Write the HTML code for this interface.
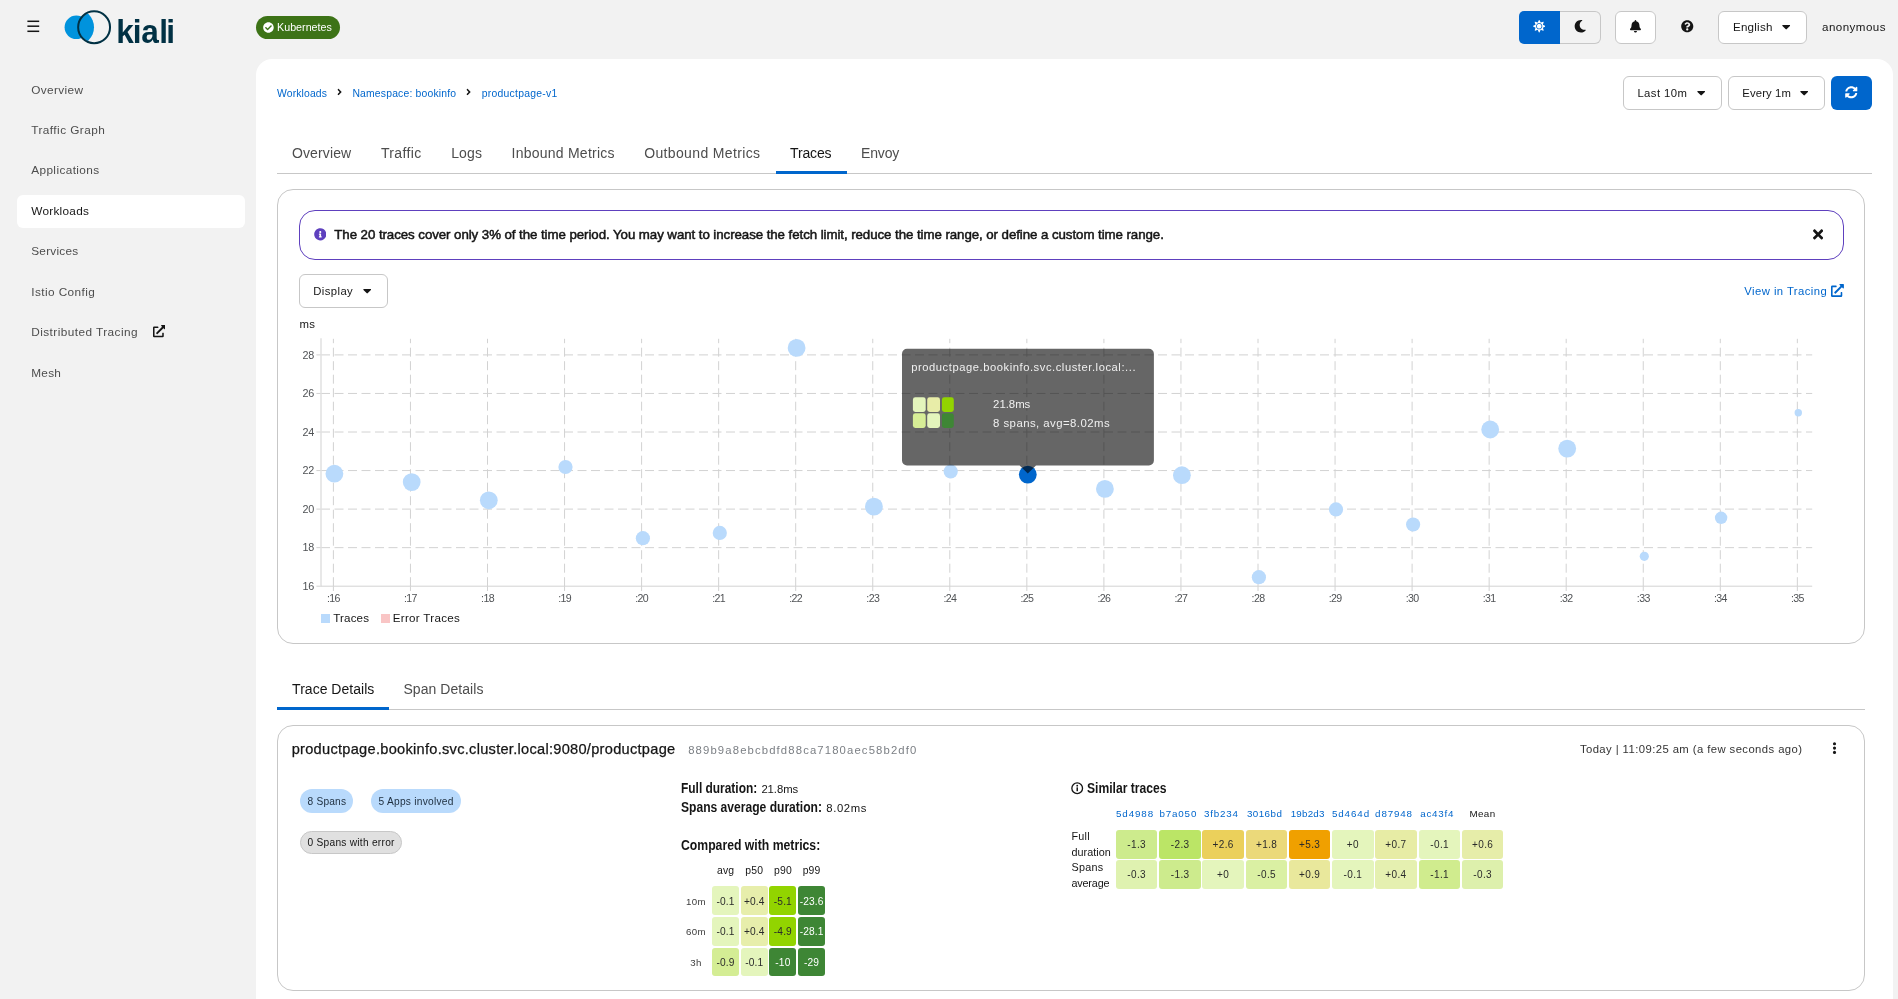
<!DOCTYPE html>
<html lang="en"><head><meta charset="utf-8"><title>Kiali</title>
<style>
html,body{margin:0;padding:0;}
body{width:1898px;height:999px;position:relative;overflow:hidden;background:#f2f2f2;font-family:"Liberation Sans",sans-serif;color:#151515;}
.b{position:absolute;box-sizing:border-box;}
.t{position:absolute;white-space:nowrap;}
.m{-webkit-text-stroke:0.5px currentColor;}
.m2{-webkit-text-stroke:0.25px currentColor;}
a{color:inherit;text-decoration:none;}
#root{position:absolute;left:0;top:0;width:1898px;height:999px;will-change:transform;}
</style></head><body><div id="root">
<svg class="b" style="left:27px;top:19px;" width="13" height="15" viewBox="0 0 13 15"><rect x="0.4" y="1.55" width="11.8" height="1.5" fill="#151515"/><rect x="0.4" y="6.45" width="11.8" height="1.5" fill="#151515"/><rect x="0.4" y="11.55" width="11.8" height="1.5" fill="#151515"/></svg>
<svg class="b" style="left:60px;top:6px;" width="120" height="44" viewBox="60 6 120 44"><defs><clipPath id="rc"><circle cx="94.1" cy="27.3" r="15.2"/></clipPath></defs><circle cx="76.35" cy="27.35" r="11.75" fill="#0093dd"/><circle cx="75.65" cy="27.3" r="18.35" fill="#0093dd" clip-path="url(#rc)"/><circle cx="94.1" cy="27.3" r="15.95" fill="none" stroke="#013144" stroke-width="2"/><text transform="translate(116.17,42.5) scale(0.93,1)" x="0 17.96 27.1 46.34 53.76" y="0" font-family="Liberation Sans, sans-serif" font-weight="700" font-size="34" fill="#013144">kiali</text></svg>
<div class="b" style="left:255.5px;top:16px;width:84px;height:23px;background:#3d7317;border-radius:12px;"></div>
<svg class="b" style="left:262.95px;top:21.95px;" width="10.9" height="10.9" viewBox="0 0 512 512"><path fill="#ffffff" d="M504 256c0 136.967-111.033 248-248 248S8 392.967 8 256 119.033 8 256 8s248 111.033 248 248zM227.314 387.314l184-184c6.248-6.248 6.248-16.379 0-22.627l-22.627-22.627c-6.248-6.249-16.379-6.249-22.628 0L216 308.118l-69.373-69.373c-6.248-6.249-16.379-6.249-22.628 0l-22.627 22.627c-6.248 6.248-6.248 16.379 0 22.627l104 104c6.249 6.249 16.379 6.249 22.628.001z"/></svg>
<div class="t " style="left:277.00px;top:19px;font-size:10.7px;line-height:16px;color:#ffffff;letter-spacing:0.027px;">Kubernetes</div>
<div class="b" style="left:1519px;top:11px;width:41px;height:33px;background:#0066cc;border-radius:5px 0 0 5px;"></div>
<div class="b" style="left:1560px;top:11px;width:41px;height:33px;background:#f2f2f2;border:1px solid #c7c7c7;border-left:none;border-radius:0 6px 6px 0;"></div>
<svg class="b" style="left:1533.0px;top:20.2px;" width="12.4" height="12.4" viewBox="0 0 512 512"><path fill="#ffffff" d="M256 160c-52.9 0-96 43.1-96 96s43.1 96 96 96 96-43.1 96-96-43.1-96-96-96zm246.4 80.5l-94.7-47.3 33.5-100.4c4.5-13.6-8.4-26.5-21.9-21.9l-100.4 33.5-47.4-94.8c-6.4-12.8-24.6-12.8-31 0l-47.3 94.7L92.7 70.8c-13.6-4.5-26.5 8.4-21.9 21.9l33.5 100.4-94.7 47.4c-12.8 6.4-12.8 24.6 0 31l94.7 47.3-33.5 100.5c-4.5 13.6 8.4 26.5 21.9 21.9l100.4-33.5 47.3 94.7c6.4 12.8 24.6 12.8 31 0l47.3-94.7 100.4 33.5c13.6 4.5 26.5-8.4 21.9-21.9l-33.5-100.4 94.7-47.3c13-6.5 13-24.7.2-31.1zm-155.9 106c-49.9 49.9-131.1 49.9-181 0-49.9-49.9-49.9-131.1 0-181 49.9-49.9 131.1-49.9 181 0 49.9 49.9 49.9 131.1 0 181z"/></svg>
<svg class="b" style="left:1573.9px;top:20.1px;" width="12.5" height="12.5" viewBox="0 0 512 512"><path fill="#151515" d="M283.211 512c78.962 0 151.079-35.925 198.857-94.792 7.068-8.708-.639-21.43-11.562-19.35-124.203 23.654-238.262-71.576-238.262-196.954 0-72.222 38.662-138.635 101.498-174.394 9.686-5.512 7.25-20.197-3.756-22.23A258.156 258.156 0 0 0 283.211 0c-141.309 0-256 114.511-256 256 0 141.309 114.511 256 256 256z"/></svg>
<div class="b" style="left:1615px;top:11px;width:41px;height:33px;background:#fff;border:1px solid #c7c7c7;border-radius:6px;"></div>
<svg class="b" style="left:1629.6px;top:20.1px;" width="10.95" height="12.5" viewBox="0 0 448 512"><path fill="#151515" d="M224 512c35.32 0 63.97-28.65 63.97-64H160.03c0 35.35 28.65 64 63.97 64zm215.39-149.71c-19.32-20.76-55.47-51.99-55.47-154.29 0-77.7-54.48-139.9-127.94-155.16V32c0-17.67-14.32-32-31.98-32s-31.98 14.33-31.98 32v20.84C118.56 68.1 64.08 130.3 64.08 208c0 102.3-36.15 133.53-55.47 154.29-6 6.45-8.66 14.16-8.61 21.71.11 16.4 12.98 32 32.1 32h383.8c19.12 0 32-15.6 32.1-32 .05-7.55-2.61-15.27-8.61-21.71z"/></svg>
<svg class="b" style="left:1681.0px;top:20.2px;" width="12.5" height="12.5" viewBox="0 0 512 512"><path fill="#151515" d="M504 256c0 136.997-111.043 248-248 248S8 392.997 8 256C8 119.083 119.043 8 256 8s248 111.083 248 248zM262.655 90c-54.497 0-89.255 22.957-116.549 63.758-3.536 5.286-2.353 12.415 2.715 16.258l34.699 26.31c5.205 3.947 12.621 3.008 16.665-2.122 17.864-22.658 30.113-35.797 57.303-35.797 20.429 0 45.698 13.148 45.698 32.958 0 14.976-12.363 22.667-32.534 33.976C247.128 238.528 216 254.941 216 296v4c0 6.627 5.373 12 12 12h56c6.627 0 12-5.373 12-12v-1.333c0-28.462 83.186-29.647 83.186-106.667 0-58.002-60.165-102-116.531-102zM256 338c-25.365 0-46 20.635-46 46 0 25.364 20.635 46 46 46s46-20.636 46-46c0-25.365-20.635-46-46-46z"/></svg>
<div class="b" style="left:1718px;top:11px;width:89px;height:33px;background:#fff;border:1px solid #c7c7c7;border-radius:6px;"></div>
<div class="t " style="left:1733.00px;top:18px;font-size:11.6px;line-height:17px;color:#151515;letter-spacing:0.222px;">English</div>
<svg class="b" style="left:1782.3px;top:20.3px;" width="8.4" height="13.4" viewBox="0 0 320 512"><path fill="#151515" d="M31.3 192h257.3c17.8 0 26.7 21.5 14.1 34.1L174.1 354.8c-7.8 7.8-20.5 7.8-28.3 0L17.2 226.1C4.6 213.5 13.5 192 31.3 192z"/></svg>
<div class="t " style="left:1822.00px;top:18px;font-size:11.6px;line-height:17px;color:#151515;letter-spacing:0.447px;">anonymous</div>
<div class="b" style="left:17px;top:195px;width:228px;height:33px;background:#fff;border-radius:6px;"></div>
<div class="t " style="left:31.20px;top:81px;font-size:11.8px;line-height:18px;color:#4d4d4d;letter-spacing:0.365px;">Overview</div>
<div class="t " style="left:31.20px;top:121px;font-size:11.8px;line-height:18px;color:#4d4d4d;letter-spacing:0.454px;">Traffic Graph</div>
<div class="t " style="left:31.20px;top:161px;font-size:11.8px;line-height:18px;color:#4d4d4d;letter-spacing:0.398px;">Applications</div>
<div class="t " style="left:31.20px;top:202px;font-size:11.8px;line-height:18px;color:#151515;letter-spacing:0.275px;">Workloads</div>
<div class="t " style="left:31.20px;top:242px;font-size:11.8px;line-height:18px;color:#4d4d4d;letter-spacing:0.256px;">Services</div>
<div class="t " style="left:31.20px;top:283px;font-size:11.8px;line-height:18px;color:#4d4d4d;letter-spacing:0.423px;">Istio Config</div>
<div class="t " style="left:31.20px;top:323px;font-size:11.8px;line-height:18px;color:#4d4d4d;letter-spacing:0.448px;">Distributed Tracing</div>
<div class="t " style="left:31.20px;top:364px;font-size:11.8px;line-height:18px;color:#4d4d4d;letter-spacing:0.286px;">Mesh</div>
<svg class="b" style="left:152.7px;top:325.4px;" width="12.3" height="12.3" viewBox="0 0 512 512"><path fill="#151515" d="M432,320H400a16,16,0,0,0-16,16V448H64V128H208a16,16,0,0,0,16-16V80a16,16,0,0,0-16-16H48A48,48,0,0,0,0,112V464a48,48,0,0,0,48,48H400a48,48,0,0,0,48-48V336A16,16,0,0,0,432,320ZM488,0h-128c-21.37,0-32.05,25.91-17,41l35.73,35.73L135,320.37a24,24,0,0,0,0,34L157.67,377a24,24,0,0,0,34,0L435.28,133.32,471,169c15,15,41,4.5,41-17V24A24,24,0,0,0,488,0Z"/></svg>
<div class="b" style="left:256px;top:59px;width:1637px;height:960px;background:#fff;border-radius:16px 16px 0 0;"></div>
<div class="t " style="left:277.10px;top:86px;font-size:10.4px;line-height:15px;color:#0066cc;letter-spacing:0.107px;">Workloads</div>
<svg class="b" style="left:335.6px;top:87.4px;" width="7.2" height="10" viewBox="0 0 256 512"><path fill="#151515" d="M224.3 273l-136 136c-9.4 9.4-24.6 9.4-33.9 0l-22.6-22.6c-9.4-9.4-9.4-24.6 0-33.9l96.4-96.4-96.4-96.4c-9.4-9.4-9.4-24.6 0-33.9L54.3 103c9.4-9.4 24.6-9.4 33.9 0l136 136c9.5 9.4 9.5 24.6.1 34z"/></svg>
<div class="t " style="left:352.40px;top:86px;font-size:10.4px;line-height:15px;color:#0066cc;letter-spacing:0.174px;">Namespace: bookinfo</div>
<svg class="b" style="left:465.4px;top:87.4px;" width="7.2" height="10" viewBox="0 0 256 512"><path fill="#151515" d="M224.3 273l-136 136c-9.4 9.4-24.6 9.4-33.9 0l-22.6-22.6c-9.4-9.4-9.4-24.6 0-33.9l96.4-96.4-96.4-96.4c-9.4-9.4-9.4-24.6 0-33.9L54.3 103c9.4-9.4 24.6-9.4 33.9 0l136 136c9.5 9.4 9.5 24.6.1 34z"/></svg>
<div class="t " style="left:481.80px;top:86px;font-size:10.4px;line-height:15px;color:#0066cc;letter-spacing:0.245px;">productpage-v1</div>
<div class="b" style="left:1623px;top:76px;width:99px;height:34px;background:#fff;border:1px solid #c7c7c7;border-radius:6px;"></div>
<div class="t " style="left:1637.40px;top:85px;font-size:11.3px;line-height:16px;color:#151515;letter-spacing:0.427px;">Last 10m</div>
<svg class="b" style="left:1697px;top:86px;" width="8.4" height="13.4" viewBox="0 0 320 512"><path fill="#151515" d="M31.3 192h257.3c17.8 0 26.7 21.5 14.1 34.1L174.1 354.8c-7.8 7.8-20.5 7.8-28.3 0L17.2 226.1C4.6 213.5 13.5 192 31.3 192z"/></svg>
<div class="b" style="left:1728px;top:76px;width:97px;height:34px;background:#fff;border:1px solid #c7c7c7;border-radius:6px;"></div>
<div class="t " style="left:1742.30px;top:85px;font-size:11.3px;line-height:16px;color:#151515;letter-spacing:0.122px;">Every 1m</div>
<svg class="b" style="left:1800px;top:86px;" width="8.4" height="13.4" viewBox="0 0 320 512"><path fill="#151515" d="M31.3 192h257.3c17.8 0 26.7 21.5 14.1 34.1L174.1 354.8c-7.8 7.8-20.5 7.8-28.3 0L17.2 226.1C4.6 213.5 13.5 192 31.3 192z"/></svg>
<div class="b" style="left:1831px;top:76px;width:41px;height:34px;background:#0066cc;border-radius:6px;"></div>
<svg class="b" style="left:1845.2px;top:86.4px;" width="12.5" height="12.5" viewBox="0 0 512 512"><path fill="#ffffff" d="M370.72 133.28C339.458 104.008 298.888 87.962 255.848 88c-77.458.068-144.328 53.178-162.791 126.85-1.344 5.363-6.122 9.15-11.651 9.15H24.103c-7.498 0-13.194-6.807-11.807-14.176C33.933 94.924 134.813 8 256 8c66.448 0 126.791 26.136 171.315 68.685L463.03 40.97C478.149 25.851 504 36.559 504 57.941V192c0 13.255-10.745 24-24 24H345.941c-21.382 0-32.09-25.851-16.971-40.971l41.75-41.749zM32 296h134.059c21.382 0 32.09 25.851 16.971 40.971l-41.75 41.75c31.262 29.273 71.835 45.319 114.876 45.28 77.418-.07 144.315-53.144 162.787-126.849 1.344-5.363 6.122-9.15 11.651-9.15h57.304c7.498 0 13.194 6.807 11.807 14.176C478.067 417.076 377.187 504 256 504c-66.448 0-126.791-26.136-171.315-68.685L48.97 471.03C33.851 486.149 8 475.441 8 454.059V320c0-13.255 10.745-24 24-24z"/></svg>
<div class="b" style="left:277px;top:173px;width:1595px;height:1px;background:#c7c7c7;"></div>
<div class="t " style="left:291.90px;top:143px;font-size:14.0px;line-height:20px;color:#4d4d4d;letter-spacing:0.132px;">Overview</div>
<div class="t " style="left:380.90px;top:143px;font-size:14.0px;line-height:20px;color:#4d4d4d;letter-spacing:0.383px;">Traffic</div>
<div class="t " style="left:451.20px;top:143px;font-size:14.0px;line-height:20px;color:#4d4d4d;letter-spacing:0.135px;">Logs</div>
<div class="t " style="left:511.50px;top:143px;font-size:14.0px;line-height:20px;color:#4d4d4d;letter-spacing:0.246px;">Inbound Metrics</div>
<div class="t " style="left:644.20px;top:143px;font-size:14.0px;line-height:20px;color:#4d4d4d;letter-spacing:0.356px;">Outbound Metrics</div>
<div class="t " style="left:790.10px;top:143px;font-size:14.0px;line-height:20px;color:#151515;letter-spacing:-0.161px;">Traces</div>
<div class="t " style="left:861.10px;top:143px;font-size:14.0px;line-height:20px;color:#4d4d4d;letter-spacing:-0.182px;">Envoy</div>
<div class="b" style="left:775.6px;top:171.4px;width:71.2px;height:2.8px;background:#0066cc;"></div>
<div class="b" style="left:277px;top:189px;width:1588px;height:455px;background:#fff;border:1px solid #c7c7c7;border-radius:16px;"></div>
<div class="b" style="left:299px;top:210px;width:1545px;height:50px;background:#fff;border:1px solid #5e40be;border-radius:16px;"></div>
<svg class="b" style="left:313.9px;top:228.2px;" width="12.6" height="12.6" viewBox="0 0 512 512"><path fill="#5e40be" d="M256 8C119.043 8 8 119.083 8 256c0 136.997 111.043 248 248 248s248-111.003 248-248C504 119.083 392.957 8 256 8zm0 110c23.196 0 42 18.804 42 42s-18.804 42-42 42-42-18.804-42-42 18.804-42 42-42zm56 254c0 6.627-5.373 12-12 12h-88c-6.627 0-12-5.373-12-12v-24c0-6.627 5.373-12 12-12h12v-64h-12c-6.627 0-12-5.373-12-12v-24c0-6.627 5.373-12 12-12h64c6.627 0 12 5.373 12 12v100h12c6.627 0 12 5.373 12 12v24z"/></svg>
<div class="t m" style="left:334.30px;top:225px;font-size:13.3px;line-height:19px;color:#151515;letter-spacing:-0.071px;">The 20 traces cover only 3% of the time period. You may want to increase the fetch limit, reduce the time range, or define a custom time range.</div>
<svg class="b" style="left:1813.2px;top:226.6px;" width="10.2" height="14.8" viewBox="0 0 352 512"><path fill="#151515" d="M242.72 256l100.07-100.07c12.28-12.28 12.28-32.19 0-44.48l-22.24-22.24c-12.28-12.28-32.19-12.28-44.48 0L176 189.28 75.93 89.21c-12.28-12.28-32.19-12.28-44.48 0L9.21 111.45c-12.28 12.28-12.28 32.19 0 44.48L109.28 256 9.21 356.07c-12.28 12.28-12.28 32.19 0 44.48l22.24 22.24c12.28 12.28 32.2 12.28 44.48 0L176 322.72l100.07 100.07c12.28 12.28 32.2 12.28 44.48 0l22.24-22.24c12.28-12.28 12.28-32.19 0-44.48L242.72 256z"/></svg>
<div class="b" style="left:299px;top:274px;width:89px;height:34px;background:#fff;border:1px solid #c7c7c7;border-radius:6px;"></div>
<div class="t " style="left:313.20px;top:283px;font-size:11.3px;line-height:16px;color:#151515;letter-spacing:0.421px;">Display</div>
<svg class="b" style="left:363.1px;top:284.2px;" width="8.4" height="13.4" viewBox="0 0 320 512"><path fill="#151515" d="M31.3 192h257.3c17.8 0 26.7 21.5 14.1 34.1L174.1 354.8c-7.8 7.8-20.5 7.8-28.3 0L17.2 226.1C4.6 213.5 13.5 192 31.3 192z"/></svg>
<div class="t " style="left:1744.30px;top:283px;font-size:11.3px;line-height:16px;color:#0066cc;letter-spacing:0.432px;">View in Tracing</div>
<svg class="b" style="left:1830.7px;top:283.8px;" width="12.9" height="12.9" viewBox="0 0 512 512"><path fill="#0066cc" d="M432,320H400a16,16,0,0,0-16,16V448H64V128H208a16,16,0,0,0,16-16V80a16,16,0,0,0-16-16H48A48,48,0,0,0,0,112V464a48,48,0,0,0,48,48H400a48,48,0,0,0,48-48V336A16,16,0,0,0,432,320ZM488,0h-128c-21.37,0-32.05,25.91-17,41l35.73,35.73L135,320.37a24,24,0,0,0,0,34L157.67,377a24,24,0,0,0,34,0L435.28,133.32,471,169c15,15,41,4.5,41-17V24A24,24,0,0,0,488,0Z"/></svg>
<div class="t " style="left:299.50px;top:316px;font-size:11.4px;line-height:16px;color:#151515;letter-spacing:0.302px;">ms</div>
<svg class="b" style="left:290px;top:330px;" width="1580" height="312" viewBox="290 330 1580 312"><line x1="321.0" y1="354.90" x2="1812.2" y2="354.90" stroke="#d2d2d2" stroke-width="1" stroke-dasharray="9 4.5"/><line x1="321.0" y1="393.45" x2="1812.2" y2="393.45" stroke="#d2d2d2" stroke-width="1" stroke-dasharray="9 4.5"/><line x1="321.0" y1="432.00" x2="1812.2" y2="432.00" stroke="#d2d2d2" stroke-width="1" stroke-dasharray="9 4.5"/><line x1="321.0" y1="470.55" x2="1812.2" y2="470.55" stroke="#d2d2d2" stroke-width="1" stroke-dasharray="9 4.5"/><line x1="321.0" y1="509.10" x2="1812.2" y2="509.10" stroke="#d2d2d2" stroke-width="1" stroke-dasharray="9 4.5"/><line x1="321.0" y1="547.65" x2="1812.2" y2="547.65" stroke="#d2d2d2" stroke-width="1" stroke-dasharray="9 4.5"/><line x1="316.4" y1="354.90" x2="321.0" y2="354.90" stroke="#d2d2d2" stroke-width="1"/><line x1="316.4" y1="393.45" x2="321.0" y2="393.45" stroke="#d2d2d2" stroke-width="1"/><line x1="316.4" y1="432.00" x2="321.0" y2="432.00" stroke="#d2d2d2" stroke-width="1"/><line x1="316.4" y1="470.55" x2="321.0" y2="470.55" stroke="#d2d2d2" stroke-width="1"/><line x1="316.4" y1="509.10" x2="321.0" y2="509.10" stroke="#d2d2d2" stroke-width="1"/><line x1="316.4" y1="547.65" x2="321.0" y2="547.65" stroke="#d2d2d2" stroke-width="1"/><line x1="316.4" y1="586.20" x2="321.0" y2="586.20" stroke="#d2d2d2" stroke-width="1"/><line x1="333.40" y1="586.2" x2="333.40" y2="338.8" stroke="#d2d2d2" stroke-width="1" stroke-dasharray="9 4.5"/><line x1="333.40" y1="586.2" x2="333.40" y2="591.0" stroke="#d2d2d2" stroke-width="1"/><line x1="410.45" y1="586.2" x2="410.45" y2="338.8" stroke="#d2d2d2" stroke-width="1" stroke-dasharray="9 4.5"/><line x1="410.45" y1="586.2" x2="410.45" y2="591.0" stroke="#d2d2d2" stroke-width="1"/><line x1="487.50" y1="586.2" x2="487.50" y2="338.8" stroke="#d2d2d2" stroke-width="1" stroke-dasharray="9 4.5"/><line x1="487.50" y1="586.2" x2="487.50" y2="591.0" stroke="#d2d2d2" stroke-width="1"/><line x1="564.55" y1="586.2" x2="564.55" y2="338.8" stroke="#d2d2d2" stroke-width="1" stroke-dasharray="9 4.5"/><line x1="564.55" y1="586.2" x2="564.55" y2="591.0" stroke="#d2d2d2" stroke-width="1"/><line x1="641.60" y1="586.2" x2="641.60" y2="338.8" stroke="#d2d2d2" stroke-width="1" stroke-dasharray="9 4.5"/><line x1="641.60" y1="586.2" x2="641.60" y2="591.0" stroke="#d2d2d2" stroke-width="1"/><line x1="718.65" y1="586.2" x2="718.65" y2="338.8" stroke="#d2d2d2" stroke-width="1" stroke-dasharray="9 4.5"/><line x1="718.65" y1="586.2" x2="718.65" y2="591.0" stroke="#d2d2d2" stroke-width="1"/><line x1="795.70" y1="586.2" x2="795.70" y2="338.8" stroke="#d2d2d2" stroke-width="1" stroke-dasharray="9 4.5"/><line x1="795.70" y1="586.2" x2="795.70" y2="591.0" stroke="#d2d2d2" stroke-width="1"/><line x1="872.75" y1="586.2" x2="872.75" y2="338.8" stroke="#d2d2d2" stroke-width="1" stroke-dasharray="9 4.5"/><line x1="872.75" y1="586.2" x2="872.75" y2="591.0" stroke="#d2d2d2" stroke-width="1"/><line x1="949.80" y1="586.2" x2="949.80" y2="338.8" stroke="#d2d2d2" stroke-width="1" stroke-dasharray="9 4.5"/><line x1="949.80" y1="586.2" x2="949.80" y2="591.0" stroke="#d2d2d2" stroke-width="1"/><line x1="1026.85" y1="586.2" x2="1026.85" y2="338.8" stroke="#d2d2d2" stroke-width="1" stroke-dasharray="9 4.5"/><line x1="1026.85" y1="586.2" x2="1026.85" y2="591.0" stroke="#d2d2d2" stroke-width="1"/><line x1="1103.90" y1="586.2" x2="1103.90" y2="338.8" stroke="#d2d2d2" stroke-width="1" stroke-dasharray="9 4.5"/><line x1="1103.90" y1="586.2" x2="1103.90" y2="591.0" stroke="#d2d2d2" stroke-width="1"/><line x1="1180.95" y1="586.2" x2="1180.95" y2="338.8" stroke="#d2d2d2" stroke-width="1" stroke-dasharray="9 4.5"/><line x1="1180.95" y1="586.2" x2="1180.95" y2="591.0" stroke="#d2d2d2" stroke-width="1"/><line x1="1258.00" y1="586.2" x2="1258.00" y2="338.8" stroke="#d2d2d2" stroke-width="1" stroke-dasharray="9 4.5"/><line x1="1258.00" y1="586.2" x2="1258.00" y2="591.0" stroke="#d2d2d2" stroke-width="1"/><line x1="1335.05" y1="586.2" x2="1335.05" y2="338.8" stroke="#d2d2d2" stroke-width="1" stroke-dasharray="9 4.5"/><line x1="1335.05" y1="586.2" x2="1335.05" y2="591.0" stroke="#d2d2d2" stroke-width="1"/><line x1="1412.10" y1="586.2" x2="1412.10" y2="338.8" stroke="#d2d2d2" stroke-width="1" stroke-dasharray="9 4.5"/><line x1="1412.10" y1="586.2" x2="1412.10" y2="591.0" stroke="#d2d2d2" stroke-width="1"/><line x1="1489.15" y1="586.2" x2="1489.15" y2="338.8" stroke="#d2d2d2" stroke-width="1" stroke-dasharray="9 4.5"/><line x1="1489.15" y1="586.2" x2="1489.15" y2="591.0" stroke="#d2d2d2" stroke-width="1"/><line x1="1566.20" y1="586.2" x2="1566.20" y2="338.8" stroke="#d2d2d2" stroke-width="1" stroke-dasharray="9 4.5"/><line x1="1566.20" y1="586.2" x2="1566.20" y2="591.0" stroke="#d2d2d2" stroke-width="1"/><line x1="1643.25" y1="586.2" x2="1643.25" y2="338.8" stroke="#d2d2d2" stroke-width="1" stroke-dasharray="9 4.5"/><line x1="1643.25" y1="586.2" x2="1643.25" y2="591.0" stroke="#d2d2d2" stroke-width="1"/><line x1="1720.30" y1="586.2" x2="1720.30" y2="338.8" stroke="#d2d2d2" stroke-width="1" stroke-dasharray="9 4.5"/><line x1="1720.30" y1="586.2" x2="1720.30" y2="591.0" stroke="#d2d2d2" stroke-width="1"/><line x1="1797.35" y1="586.2" x2="1797.35" y2="338.8" stroke="#d2d2d2" stroke-width="1" stroke-dasharray="9 4.5"/><line x1="1797.35" y1="586.2" x2="1797.35" y2="591.0" stroke="#d2d2d2" stroke-width="1"/><line x1="321.0" y1="338.3" x2="321.0" y2="586.2" stroke="#e0e0e0" stroke-width="1.5"/><line x1="321.0" y1="586.2" x2="1812.2" y2="586.2" stroke="#d2d2d2" stroke-width="1"/><circle cx="334.4" cy="473.7" r="8.9" fill="#b9dafc"/><circle cx="411.7" cy="482.1" r="8.9" fill="#b9dafc"/><circle cx="488.8" cy="500.3" r="8.9" fill="#b9dafc"/><circle cx="565.5" cy="467.0" r="7.1" fill="#b9dafc"/><circle cx="642.9" cy="538.2" r="7.1" fill="#b9dafc"/><circle cx="719.8" cy="532.9" r="7.1" fill="#b9dafc"/><circle cx="796.6" cy="347.9" r="8.9" fill="#b9dafc"/><circle cx="873.9" cy="506.6" r="8.9" fill="#b9dafc"/><circle cx="950.7" cy="471.5" r="7.1" fill="#b9dafc"/><circle cx="1027.8" cy="474.6" r="8.9" fill="#0066cc"/><circle cx="1104.9" cy="488.9" r="8.9" fill="#b9dafc"/><circle cx="1181.9" cy="475.2" r="8.9" fill="#b9dafc"/><circle cx="1258.9" cy="577.2" r="7.1" fill="#b9dafc"/><circle cx="1336.0" cy="509.4" r="7.1" fill="#b9dafc"/><circle cx="1413.1" cy="524.5" r="7.1" fill="#b9dafc"/><circle cx="1490.2" cy="429.5" r="8.9" fill="#b9dafc"/><circle cx="1567.2" cy="448.6" r="8.9" fill="#b9dafc"/><circle cx="1644.3" cy="556.3" r="4.6" fill="#b9dafc"/><circle cx="1721.1" cy="517.8" r="6.2" fill="#b9dafc"/><circle cx="1798.3" cy="412.7" r="3.7" fill="#b9dafc"/><path d="M907 348.8H1148.9a5 5 0 0 1 5 5V460.4a5 5 0 0 1-5 5H1036L1027.8 473.6 1019.6 465.4H907a5 5 0 0 1-5-5V353.8a5 5 0 0 1 5-5z" fill="#000" fill-opacity="0.6"/><rect x="912.9" y="397.3" width="12.8" height="14.6" rx="2.4" fill="#e4f5bc"/><rect x="927.2" y="397.3" width="12.8" height="14.6" rx="2.4" fill="#e8eda8"/><rect x="941.9" y="397.3" width="11.9" height="14.6" rx="2.4" fill="#92d400"/><rect x="912.9" y="413.3" width="12.8" height="14.6" rx="2.4" fill="#d7ee96"/><rect x="927.2" y="413.3" width="12.8" height="14.6" rx="2.4" fill="#e4f5bc"/><rect x="941.9" y="413.3" width="11.9" height="14.6" rx="2.4" fill="#3e8635"/></svg>
<div class="t " style="left:302.40px;top:347px;font-size:10.8px;line-height:16px;color:#4f5255;letter-spacing:-0.107px;">28</div>
<div class="t " style="left:302.40px;top:385px;font-size:10.8px;line-height:16px;color:#4f5255;letter-spacing:-0.107px;">26</div>
<div class="t " style="left:302.40px;top:424px;font-size:10.8px;line-height:16px;color:#4f5255;letter-spacing:-0.107px;">24</div>
<div class="t " style="left:302.40px;top:462px;font-size:10.8px;line-height:16px;color:#4f5255;letter-spacing:-0.107px;">22</div>
<div class="t " style="left:302.40px;top:501px;font-size:10.8px;line-height:16px;color:#4f5255;letter-spacing:-0.107px;">20</div>
<div class="t " style="left:302.40px;top:539px;font-size:10.8px;line-height:16px;color:#4f5255;letter-spacing:-0.107px;">18</div>
<div class="t " style="left:302.40px;top:578px;font-size:10.8px;line-height:16px;color:#4f5255;letter-spacing:-0.107px;">16</div>
<div class="t " style="left:327.00px;top:590px;font-size:10.6px;line-height:16px;color:#4f5255;letter-spacing:-0.645px;">:16</div>
<div class="t " style="left:404.05px;top:590px;font-size:10.6px;line-height:16px;color:#4f5255;letter-spacing:-0.645px;">:17</div>
<div class="t " style="left:481.10px;top:590px;font-size:10.6px;line-height:16px;color:#4f5255;letter-spacing:-0.645px;">:18</div>
<div class="t " style="left:558.15px;top:590px;font-size:10.6px;line-height:16px;color:#4f5255;letter-spacing:-0.645px;">:19</div>
<div class="t " style="left:635.20px;top:590px;font-size:10.6px;line-height:16px;color:#4f5255;letter-spacing:-0.645px;">:20</div>
<div class="t " style="left:712.25px;top:590px;font-size:10.6px;line-height:16px;color:#4f5255;letter-spacing:-0.645px;">:21</div>
<div class="t " style="left:789.30px;top:590px;font-size:10.6px;line-height:16px;color:#4f5255;letter-spacing:-0.645px;">:22</div>
<div class="t " style="left:866.35px;top:590px;font-size:10.6px;line-height:16px;color:#4f5255;letter-spacing:-0.645px;">:23</div>
<div class="t " style="left:943.40px;top:590px;font-size:10.6px;line-height:16px;color:#4f5255;letter-spacing:-0.645px;">:24</div>
<div class="t " style="left:1020.45px;top:590px;font-size:10.6px;line-height:16px;color:#4f5255;letter-spacing:-0.645px;">:25</div>
<div class="t " style="left:1097.50px;top:590px;font-size:10.6px;line-height:16px;color:#4f5255;letter-spacing:-0.645px;">:26</div>
<div class="t " style="left:1174.55px;top:590px;font-size:10.6px;line-height:16px;color:#4f5255;letter-spacing:-0.645px;">:27</div>
<div class="t " style="left:1251.60px;top:590px;font-size:10.6px;line-height:16px;color:#4f5255;letter-spacing:-0.645px;">:28</div>
<div class="t " style="left:1328.65px;top:590px;font-size:10.6px;line-height:16px;color:#4f5255;letter-spacing:-0.645px;">:29</div>
<div class="t " style="left:1405.70px;top:590px;font-size:10.6px;line-height:16px;color:#4f5255;letter-spacing:-0.645px;">:30</div>
<div class="t " style="left:1482.75px;top:590px;font-size:10.6px;line-height:16px;color:#4f5255;letter-spacing:-0.645px;">:31</div>
<div class="t " style="left:1559.80px;top:590px;font-size:10.6px;line-height:16px;color:#4f5255;letter-spacing:-0.645px;">:32</div>
<div class="t " style="left:1636.85px;top:590px;font-size:10.6px;line-height:16px;color:#4f5255;letter-spacing:-0.645px;">:33</div>
<div class="t " style="left:1713.90px;top:590px;font-size:10.6px;line-height:16px;color:#4f5255;letter-spacing:-0.645px;">:34</div>
<div class="t " style="left:1790.95px;top:590px;font-size:10.6px;line-height:16px;color:#4f5255;letter-spacing:-0.645px;">:35</div>
<div class="b" style="left:321.1px;top:613.8px;width:8.8px;height:8.9px;background:#b9dafc;"></div>
<div class="t " style="left:333.30px;top:609px;font-size:11.6px;line-height:17px;color:#151515;letter-spacing:0.130px;">Traces</div>
<div class="b" style="left:381.1px;top:613.8px;width:8.8px;height:8.9px;background:#f9c5c5;"></div>
<div class="t " style="left:392.70px;top:609px;font-size:11.6px;line-height:17px;color:#151515;letter-spacing:0.307px;">Error Traces</div>
<div class="t " style="left:911.20px;top:359px;font-size:11.2px;line-height:16px;color:#f0f0f0;letter-spacing:0.557px;">productpage.bookinfo.svc.cluster.local:...</div>
<div class="t " style="left:993.10px;top:396px;font-size:11.4px;line-height:16px;color:#f0f0f0;letter-spacing:-0.031px;">21.8ms</div>
<div class="t " style="left:993.10px;top:415px;font-size:11.4px;line-height:16px;color:#f0f0f0;letter-spacing:0.443px;">8 spans, avg=8.02ms</div>
<div class="b" style="left:277px;top:709px;width:1588px;height:1px;background:#c7c7c7;"></div>
<div class="t " style="left:292.10px;top:679px;font-size:14.0px;line-height:20px;color:#151515;letter-spacing:0.019px;">Trace Details</div>
<div class="t " style="left:403.40px;top:679px;font-size:14.0px;line-height:20px;color:#4d4d4d;letter-spacing:0.060px;">Span Details</div>
<div class="b" style="left:277px;top:707.4px;width:112.1px;height:2.8px;background:#0066cc;"></div>
<div class="b" style="left:277px;top:725px;width:1588px;height:266px;background:#fff;border:1px solid #c7c7c7;border-radius:16px;"></div>
<div class="t m2" style="left:291.70px;top:739px;font-size:14.6px;line-height:20px;color:#151515;letter-spacing:0.280px;">productpage.bookinfo.svc.cluster.local:9080/productpage</div>
<div class="t " style="left:688.20px;top:742px;font-size:11.3px;line-height:16px;color:#7b7f84;letter-spacing:1.137px;">889b9a8ebcbdfd88ca7180aec58b2df0</div>
<div class="t " style="left:1579.90px;top:741px;font-size:11.3px;line-height:16px;color:#333;letter-spacing:0.419px;">Today | 11:09:25 am (a few seconds ago)</div>
<svg class="b" style="left:1832px;top:742px;" width="5" height="12" viewBox="0 0 5 12"><circle cx="2.5" cy="1.7" r="1.55" fill="#151515"/><circle cx="2.5" cy="6.1" r="1.55" fill="#151515"/><circle cx="2.5" cy="10.4" r="1.55" fill="#151515"/></svg>
<div class="b" style="left:300px;top:789.2px;width:52.8px;height:23.6px;background:#b9dafc;border-radius:12px;"></div>
<div class="t " style="left:307.50px;top:794px;font-size:10.2px;line-height:15px;color:#1d2d3d;letter-spacing:0.196px;">8 Spans</div>
<div class="b" style="left:371.2px;top:789.2px;width:89.7px;height:23.6px;background:#b9dafc;border-radius:12px;"></div>
<div class="t " style="left:378.50px;top:794px;font-size:10.2px;line-height:15px;color:#1d2d3d;letter-spacing:0.257px;">5 Apps involved</div>
<div class="b" style="left:300px;top:831px;width:102px;height:22.6px;background:#e0e0e0;border:1px solid #c7c7c7;border-radius:12px;"></div>
<div class="t " style="left:307.50px;top:835px;font-size:10.2px;line-height:15px;color:#151515;letter-spacing:0.252px;">0 Spans with error</div>
<div class="t " style="left:681.40px;top:778px;font-size:14.0px;line-height:20px;color:#151515;font-weight:700;transform:scaleX(0.8521);transform-origin:0 0;">Full duration:</div>
<div class="t " style="left:761.40px;top:781px;font-size:11.3px;line-height:16px;color:#151515;letter-spacing:-0.059px;">21.8ms</div>
<div class="t " style="left:681.40px;top:797px;font-size:14.0px;line-height:20px;color:#151515;font-weight:700;transform:scaleX(0.8630);transform-origin:0 0;">Spans average duration:</div>
<div class="t " style="left:826.30px;top:800px;font-size:11.3px;line-height:16px;color:#151515;letter-spacing:0.607px;">8.02ms</div>
<div class="t " style="left:681.40px;top:835px;font-size:14.0px;line-height:20px;color:#151515;font-weight:700;transform:scaleX(0.8729);transform-origin:0 0;">Compared with metrics:</div>
<div class="t " style="left:625.60px;width:200px;text-align:center;top:863px;font-size:10.4px;line-height:15px;color:#151515;letter-spacing:0.200px;">avg</div>
<div class="t " style="left:654.27px;width:200px;text-align:center;top:863px;font-size:10.4px;line-height:15px;color:#151515;letter-spacing:0.200px;">p50</div>
<div class="t " style="left:682.93px;width:200px;text-align:center;top:863px;font-size:10.4px;line-height:15px;color:#151515;letter-spacing:0.200px;">p90</div>
<div class="t " style="left:711.60px;width:200px;text-align:center;top:863px;font-size:10.4px;line-height:15px;color:#151515;letter-spacing:0.200px;">p99</div>
<div class="t " style="left:595.95px;width:200px;text-align:center;top:894px;font-size:9.7px;line-height:15px;color:#3c3c3c;letter-spacing:0.300px;">10m</div>
<div class="b" style="left:712px;top:886px;width:27px;height:28.6px;background:#e4f5bc;border-radius:3px;"></div>
<div class="t " style="left:625.56px;width:200px;text-align:center;top:894px;font-size:10.2px;line-height:15px;color:#2b2b2b;letter-spacing:0.120px;">-0.1</div>
<div class="b" style="left:740.67px;top:886px;width:27px;height:28.6px;background:#e7eeab;border-radius:3px;"></div>
<div class="t " style="left:654.23px;width:200px;text-align:center;top:894px;font-size:10.2px;line-height:15px;color:#2b2b2b;letter-spacing:0.120px;">+0.4</div>
<div class="b" style="left:769.33px;top:886px;width:27px;height:28.6px;background:#92d400;border-radius:3px;"></div>
<div class="t " style="left:682.89px;width:200px;text-align:center;top:894px;font-size:10.2px;line-height:15px;color:#2b2b2b;letter-spacing:0.120px;">-5.1</div>
<div class="b" style="left:798px;top:886px;width:27px;height:28.6px;background:#3e8635;border-radius:3px;"></div>
<div class="t " style="left:711.56px;width:200px;text-align:center;top:894px;font-size:10.2px;line-height:15px;color:#ffffff;letter-spacing:0.120px;">-23.6</div>
<div class="t " style="left:595.95px;width:200px;text-align:center;top:924px;font-size:9.7px;line-height:15px;color:#3c3c3c;letter-spacing:0.300px;">60m</div>
<div class="b" style="left:712px;top:917px;width:27px;height:28.6px;background:#e4f5bc;border-radius:3px;"></div>
<div class="t " style="left:625.56px;width:200px;text-align:center;top:924px;font-size:10.2px;line-height:15px;color:#2b2b2b;letter-spacing:0.120px;">-0.1</div>
<div class="b" style="left:740.67px;top:917px;width:27px;height:28.6px;background:#e7eeab;border-radius:3px;"></div>
<div class="t " style="left:654.23px;width:200px;text-align:center;top:924px;font-size:10.2px;line-height:15px;color:#2b2b2b;letter-spacing:0.120px;">+0.4</div>
<div class="b" style="left:769.33px;top:917px;width:27px;height:28.6px;background:#92d400;border-radius:3px;"></div>
<div class="t " style="left:682.89px;width:200px;text-align:center;top:924px;font-size:10.2px;line-height:15px;color:#2b2b2b;letter-spacing:0.120px;">-4.9</div>
<div class="b" style="left:798px;top:917px;width:27px;height:28.6px;background:#3e8635;border-radius:3px;"></div>
<div class="t " style="left:711.56px;width:200px;text-align:center;top:924px;font-size:10.2px;line-height:15px;color:#ffffff;letter-spacing:0.120px;">-28.1</div>
<div class="t " style="left:595.95px;width:200px;text-align:center;top:955px;font-size:9.7px;line-height:15px;color:#3c3c3c;letter-spacing:0.300px;">3h</div>
<div class="b" style="left:712px;top:948px;width:27px;height:28px;background:#d4ed94;border-radius:3px;"></div>
<div class="t " style="left:625.56px;width:200px;text-align:center;top:955px;font-size:10.2px;line-height:15px;color:#2b2b2b;letter-spacing:0.120px;">-0.9</div>
<div class="b" style="left:740.67px;top:948px;width:27px;height:28px;background:#e4f5bc;border-radius:3px;"></div>
<div class="t " style="left:654.23px;width:200px;text-align:center;top:955px;font-size:10.2px;line-height:15px;color:#2b2b2b;letter-spacing:0.120px;">-0.1</div>
<div class="b" style="left:769.33px;top:948px;width:27px;height:28px;background:#3e8635;border-radius:3px;"></div>
<div class="t " style="left:682.89px;width:200px;text-align:center;top:955px;font-size:10.2px;line-height:15px;color:#ffffff;letter-spacing:0.120px;">-10</div>
<div class="b" style="left:798px;top:948px;width:27px;height:28px;background:#3e8635;border-radius:3px;"></div>
<div class="t " style="left:711.56px;width:200px;text-align:center;top:955px;font-size:10.2px;line-height:15px;color:#ffffff;letter-spacing:0.120px;">-29</div>
<svg class="b" style="left:1071.2px;top:782.2px;" width="12.4" height="12.4" viewBox="0 0 16 16"><circle cx="8" cy="8" r="6.9" fill="none" stroke="#151515" stroke-width="1.7"/><rect x="7.1" y="6.9" width="1.9" height="5" fill="#151515"/><circle cx="8.05" cy="4.7" r="1.2" fill="#151515"/></svg>
<div class="t " style="left:1086.70px;top:778px;font-size:14.0px;line-height:20px;color:#151515;font-weight:700;transform:scaleX(0.8657);transform-origin:0 0;">Similar traces</div>
<div class="t " style="left:1116.00px;top:806px;font-size:9.8px;line-height:15px;color:#0066cc;letter-spacing:0.883px;">5d4988</div>
<div class="t " style="left:1159.40px;top:806px;font-size:9.8px;line-height:15px;color:#0066cc;letter-spacing:0.850px;">b7a050</div>
<div class="t " style="left:1204.00px;top:806px;font-size:9.8px;line-height:15px;color:#0066cc;letter-spacing:0.821px;">3fb234</div>
<div class="t " style="left:1246.90px;top:806px;font-size:9.8px;line-height:15px;color:#0066cc;letter-spacing:0.450px;">3016bd</div>
<div class="t " style="left:1290.70px;top:806px;font-size:9.8px;line-height:15px;color:#0066cc;letter-spacing:0.216px;">19b2d3</div>
<div class="t " style="left:1331.90px;top:806px;font-size:9.8px;line-height:15px;color:#0066cc;letter-spacing:0.900px;">5d464d</div>
<div class="t " style="left:1375.10px;top:806px;font-size:9.8px;line-height:15px;color:#0066cc;letter-spacing:0.850px;">d87948</div>
<div class="t " style="left:1420.20px;top:806px;font-size:9.8px;line-height:15px;color:#0066cc;letter-spacing:0.779px;">ac43f4</div>
<div class="t " style="left:1469.40px;top:806px;font-size:9.8px;line-height:15px;color:#151515;letter-spacing:0.396px;">Mean</div>
<div class="t " style="left:1071.40px;top:828px;font-size:10.8px;line-height:16px;color:#151515;letter-spacing:0.300px;">Full</div>
<div class="t " style="left:1071.40px;top:844px;font-size:10.8px;line-height:16px;color:#151515;letter-spacing:0.059px;">duration</div>
<div class="t " style="left:1071.40px;top:859px;font-size:10.8px;line-height:16px;color:#151515;letter-spacing:0.300px;">Spans</div>
<div class="t " style="left:1071.40px;top:875px;font-size:10.8px;line-height:16px;color:#151515;letter-spacing:-0.147px;">average</div>
<div class="b" style="left:1116px;top:830px;width:41px;height:29px;background:#cdeb8d;border-radius:3px;"></div>
<div class="t " style="left:1036.67px;width:200px;text-align:center;top:837px;font-size:10.0px;line-height:15px;color:#2b2b2b;letter-spacing:0.350px;">-1.3</div>
<div class="b" style="left:1159px;top:830px;width:42px;height:29px;background:#bbe566;border-radius:3px;"></div>
<div class="t " style="left:1080.17px;width:200px;text-align:center;top:837px;font-size:10.0px;line-height:15px;color:#2b2b2b;letter-spacing:0.350px;">-2.3</div>
<div class="b" style="left:1202px;top:830px;width:42px;height:29px;background:#ebd05b;border-radius:3px;"></div>
<div class="t " style="left:1123.17px;width:200px;text-align:center;top:837px;font-size:10.0px;line-height:15px;color:#2b2b2b;letter-spacing:0.350px;">+2.6</div>
<div class="b" style="left:1246px;top:830px;width:41px;height:29px;background:#ebd97a;border-radius:3px;"></div>
<div class="t " style="left:1166.67px;width:200px;text-align:center;top:837px;font-size:10.0px;line-height:15px;color:#2b2b2b;letter-spacing:0.350px;">+1.8</div>
<div class="b" style="left:1289px;top:830px;width:41px;height:29px;background:#f0a000;border-radius:3px;"></div>
<div class="t " style="left:1209.67px;width:200px;text-align:center;top:837px;font-size:10.0px;line-height:15px;color:#2b2b2b;letter-spacing:0.350px;">+5.3</div>
<div class="b" style="left:1332px;top:830px;width:41.5px;height:29px;background:#e4f5bc;border-radius:3px;"></div>
<div class="t " style="left:1252.92px;width:200px;text-align:center;top:837px;font-size:10.0px;line-height:15px;color:#2b2b2b;letter-spacing:0.350px;">+0</div>
<div class="b" style="left:1375px;top:830px;width:41.5px;height:29px;background:#e7eca5;border-radius:3px;"></div>
<div class="t " style="left:1295.92px;width:200px;text-align:center;top:837px;font-size:10.0px;line-height:15px;color:#2b2b2b;letter-spacing:0.350px;">+0.7</div>
<div class="b" style="left:1419px;top:830px;width:41px;height:29px;background:#e4f5bc;border-radius:3px;"></div>
<div class="t " style="left:1339.67px;width:200px;text-align:center;top:837px;font-size:10.0px;line-height:15px;color:#2b2b2b;letter-spacing:0.350px;">-0.1</div>
<div class="b" style="left:1462px;top:830px;width:41px;height:29px;background:#e6eda9;border-radius:3px;"></div>
<div class="t " style="left:1382.67px;width:200px;text-align:center;top:837px;font-size:10.0px;line-height:15px;color:#2b2b2b;letter-spacing:0.350px;">+0.6</div>
<div class="b" style="left:1116px;top:860px;width:41px;height:29px;background:#dff2b0;border-radius:3px;"></div>
<div class="t " style="left:1036.67px;width:200px;text-align:center;top:867px;font-size:10.0px;line-height:15px;color:#2b2b2b;letter-spacing:0.350px;">-0.3</div>
<div class="b" style="left:1159px;top:860px;width:42px;height:29px;background:#cdeb8d;border-radius:3px;"></div>
<div class="t " style="left:1080.17px;width:200px;text-align:center;top:867px;font-size:10.0px;line-height:15px;color:#2b2b2b;letter-spacing:0.350px;">-1.3</div>
<div class="b" style="left:1202px;top:860px;width:42px;height:29px;background:#e4f5bc;border-radius:3px;"></div>
<div class="t " style="left:1123.17px;width:200px;text-align:center;top:867px;font-size:10.0px;line-height:15px;color:#2b2b2b;letter-spacing:0.350px;">+0</div>
<div class="b" style="left:1246px;top:860px;width:41px;height:29px;background:#daf0a3;border-radius:3px;"></div>
<div class="t " style="left:1166.67px;width:200px;text-align:center;top:867px;font-size:10.0px;line-height:15px;color:#2b2b2b;letter-spacing:0.350px;">-0.5</div>
<div class="b" style="left:1289px;top:860px;width:41px;height:29px;background:#e9e89c;border-radius:3px;"></div>
<div class="t " style="left:1209.67px;width:200px;text-align:center;top:867px;font-size:10.0px;line-height:15px;color:#2b2b2b;letter-spacing:0.350px;">+0.9</div>
<div class="b" style="left:1332px;top:860px;width:41.5px;height:29px;background:#e4f5bc;border-radius:3px;"></div>
<div class="t " style="left:1252.92px;width:200px;text-align:center;top:867px;font-size:10.0px;line-height:15px;color:#2b2b2b;letter-spacing:0.350px;">-0.1</div>
<div class="b" style="left:1375px;top:860px;width:41.5px;height:29px;background:#e5f0b0;border-radius:3px;"></div>
<div class="t " style="left:1295.92px;width:200px;text-align:center;top:867px;font-size:10.0px;line-height:15px;color:#2b2b2b;letter-spacing:0.350px;">+0.4</div>
<div class="b" style="left:1419px;top:860px;width:41px;height:29px;background:#d0ec8e;border-radius:3px;"></div>
<div class="t " style="left:1339.67px;width:200px;text-align:center;top:867px;font-size:10.0px;line-height:15px;color:#2b2b2b;letter-spacing:0.350px;">-1.1</div>
<div class="b" style="left:1462px;top:860px;width:41px;height:29px;background:#ddf0ac;border-radius:3px;"></div>
<div class="t " style="left:1382.67px;width:200px;text-align:center;top:867px;font-size:10.0px;line-height:15px;color:#2b2b2b;letter-spacing:0.350px;">-0.3</div>
</div></body></html>
